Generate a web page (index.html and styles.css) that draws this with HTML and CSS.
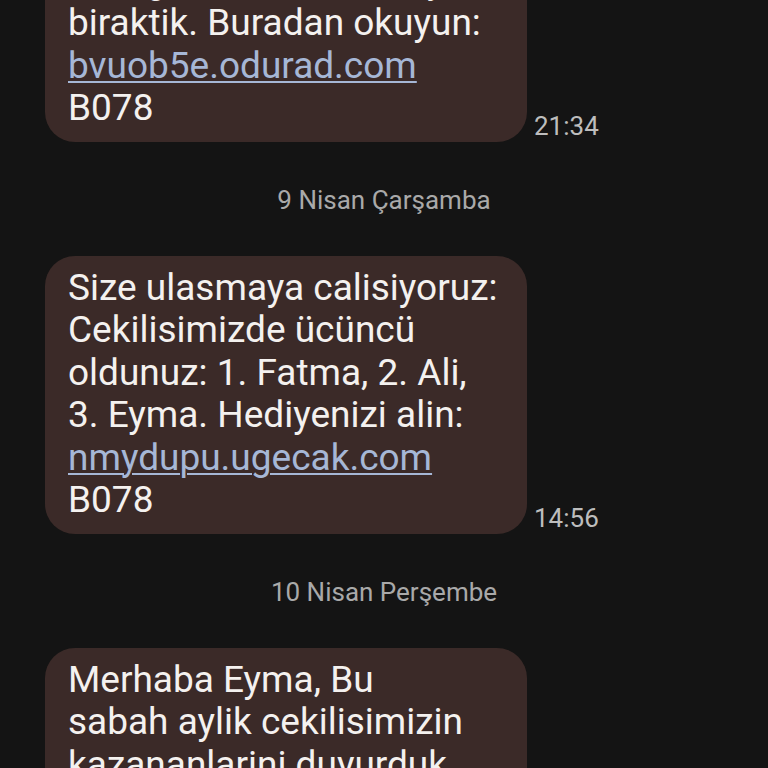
FILE: index.html
```html
<!DOCTYPE html>
<html lang="tr">
<head>
<meta charset="utf-8">
<title>Mesajlar</title>
<link rel="stylesheet" href="styles.css">
</head>
<body>
<main class="thread">
  <div class="msg-row first">
    <div class="bubble">
      Merhaba, cekilis sonucunu<br>
      Size gore ozel bir hediye<br>
      biraktik. Buradan okuyun:<br>
      <a class="link" href="#">bvuob5e.odurad.com</a><br>
      B078
    </div>
    <span class="time">21:34</span>
  </div>

  <div class="date">9 Nisan Çarşamba</div>

  <div class="msg-row">
    <div class="bubble">
      Size ulasmaya calisiyoruz:<br>
      Cekilisimizde ücüncü<br>
      oldunuz: 1. Fatma, 2. Ali,<br>
      3. Eyma. Hediyenizi alin:<br>
      <a class="link" href="#">nmydupu.ugecak.com</a><br>
      B078
    </div>
    <span class="time">14:56</span>
  </div>

  <div class="date">10 Nisan Perşembe</div>

  <div class="msg-row">
    <div class="bubble">
      Merhaba Eyma, Bu<br>
      sabah aylik cekilisimizin<br>
      kazananlarini duyurduk.<br>
      Hediyenizi almak icin<br>
      tiklayin
    </div>
    <span class="time">09:12</span>
  </div>
</main>
</body>
</html>
```

FILE: styles.css
```css
html, body {
  margin: 0;
  padding: 0;
  background: #141414;
}

body {
  font-family: Roboto, "Noto Sans", "Liberation Sans", sans-serif;
  overflow: hidden;
  height: 768px;
}

.thread {
  display: flex;
  flex-direction: column;
  padding-left: 45px;
  margin-top: -94px;
}

.msg-row {
  display: flex;
  align-items: flex-end;
  gap: 7px;
}

.bubble {
  box-sizing: border-box;
  width: 482px;
  background: #3b2a28;
  color: #f4f1ef;
  font-size: 37px;
  line-height: 42.5px;
  padding: 11px 20px 12px 23px;
  border-radius: 30px;
  white-space: nowrap;
}

.link {
  color: #a6b7d6;
  text-decoration: underline;
  text-decoration-thickness: 2px;
  text-underline-offset: 3px;
}

.time {
  color: #bdbdbd;
  font-size: 26px;
  line-height: 32px;
}

.date {
  align-self: center;
  margin-left: -45px;
  color: #a9a9a9;
  font-size: 26px;
  line-height: 32px;
  padding: 42px 0 40px 0;
}
```
